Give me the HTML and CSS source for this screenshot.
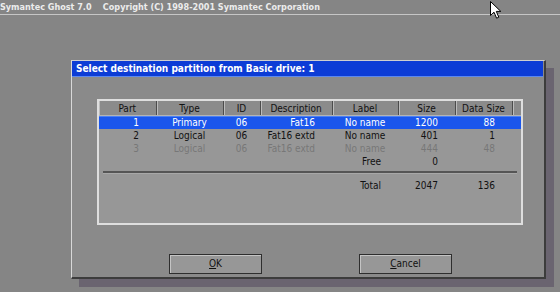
FILE: index.html
```html
<!DOCTYPE html>
<html lang="en">
  <head>
    <meta charset="UTF-8" />
    <title>Symantec Ghost 7.0</title>
    <link rel="stylesheet" href="styles.css">
  </head>
  <body>
    <div class="topbar">Symantec Ghost 7.0&nbsp;&nbsp;&nbsp; Copyright (C) 1998-2001 Symantec Corporation</div>

    <div class="dialog">
      <div class="titlebar">Select destination partition from Basic drive: 1</div>

      <div class="panel">
        <table class="parts">
          <colgroup>
            <col style="width: 57px" />
            <col style="width: 67px" />
            <col style="width: 37px" />
            <col style="width: 72px" />
            <col style="width: 66px" />
            <col style="width: 57px" />
            <col style="width: 57px" />
            <col style="width: 9px" />
          </colgroup>
          <thead>
            <tr>
              <th>Part</th>
              <th>Type</th>
              <th>ID</th>
              <th>Description</th>
              <th>Label</th>
              <th>Size</th>
              <th>Data Size</th>
              <th class="filler"></th>
            </tr>
          </thead>
          <tbody>
            <tr class="selected">
              <td class="num">1</td>
              <td class="mid">Primary</td>
              <td class="mid">06</td>
              <td class="num">Fat16</td>
              <td class="mid">No name</td>
              <td class="num">1200</td>
              <td class="num">88</td>
              <td></td>
            </tr>
            <tr>
              <td class="num">2</td>
              <td class="mid">Logical</td>
              <td class="mid">06</td>
              <td class="num">Fat16 extd</td>
              <td class="mid">No name</td>
              <td class="num">401</td>
              <td class="num">1</td>
              <td></td>
            </tr>
            <tr class="faded">
              <td class="num">3</td>
              <td class="mid">Logical</td>
              <td class="mid">06</td>
              <td class="num">Fat16 extd</td>
              <td class="mid">No name</td>
              <td class="num">444</td>
              <td class="num">48</td>
              <td></td>
            </tr>
            <tr>
              <td></td>
              <td></td>
              <td></td>
              <td></td>
              <td class="num">Free</td>
              <td class="num">0</td>
              <td></td>
              <td></td>
            </tr>
            <tr class="sep">
              <td colspan="8"><div class="rule"></div></td>
            </tr>
            <tr class="total">
              <td></td>
              <td></td>
              <td></td>
              <td></td>
              <td class="num">Total</td>
              <td class="num">2047</td>
              <td class="num">136</td>
              <td></td>
            </tr>
          </tbody>
        </table>
      </div>

      <div class="buttons">
        <div class="btn"><u>O</u>K</div>
        <div class="btn"><u>C</u>ancel</div>
      </div>
    </div>

    <svg class="cursor" width="13" height="20" viewBox="0 0 13 20">
      <path d="M1.5 1.5 L1.5 15.5 L5 12.2 L7.6 18.2 L9.8 17.2 L7.3 11.4 L11.8 11.4 Z"
            fill="#fff" stroke="#000" stroke-width="1" />
    </svg>
  </body>
</html>
```

FILE: styles.css
```css
body {
  margin: 0;
  width: 560px;
  height: 292px;
  overflow: hidden;
  position: relative;
  background: #858585;
  font-family: "Liberation Sans Narrow", "DejaVu Sans Condensed", "Liberation Sans", sans-serif;
  font-size: 10px;
  color: #111;
}

/* ========== Top Bar ========== */
.topbar {
  height: 14px;
  line-height: 14px;
  border-bottom: 1px solid #c6c6c6;
  color: #ececec;
  font-size: 9px;
  font-weight: bold;
  white-space: nowrap;
}

/* ========== Dialog ========== */
.dialog {
  box-sizing: border-box;
  width: 475px;
  height: 219px;
  margin: 45px 0 0 71px;
  background: #8a8a8a;
  border-top: 1px solid #cfcfcf;
  border-left: 1px solid #d8d8d8;
  border-right: 2px solid #3c3c3c;
  border-bottom: 2px solid #3c3c3c;
  box-shadow: 8px 8px 0 #6a6470;
}

.titlebar {
  height: 15px;
  line-height: 15px;
  margin-right: 1px;
  padding-left: 4px;
  background: #0c3cd6;
  border-bottom: 1px solid #5c88ee;
  color: #fff;
  font-size: 10px;
  font-weight: bold;
  white-space: nowrap;
}

/* ========== Partition table ========== */
.panel {
  width: 422px;
  height: 122px;
  margin: 22px 0 0 25px;
  background: #979797;
  border: 2px solid #dedede;
}

.parts {
  border-collapse: collapse;
  table-layout: fixed;
  width: 422px;
}

.parts th {
  height: 14px;
  padding: 0;
  font-weight: normal;
  text-align: center;
  background: #8b8b8b;
  border-right: 1px solid #4c4c4c;
  border-bottom: 1px solid #b4b4b4;
  box-shadow: inset 1px 0 0 #bcbcbc;
}

.parts th.filler {
  border-right: none;
}

.parts td {
  height: 13px;
  padding: 0;
  white-space: nowrap;
}

.parts td.num {
  text-align: right;
  padding-right: 17px;
}

.parts td.mid {
  text-align: center;
}

.parts tr.selected td {
  background: #1a56ec;
  color: #fff;
  box-shadow: inset 0 1px 0 #4a80f4;
}

.parts tr.faded td {
  color: #777;
}

.parts tr.sep td {
  height: 8px;
}

.rule {
  margin: 0 4px;
  border-top: 2px solid #555;
  border-bottom: 1px solid #a8a8a8;
}

.parts tr.total td {
  height: 18px;
}

/* ========== Buttons ========== */
.buttons {
  display: flex;
  gap: 97px;
  padding: 29px 0 0 97px;
}

.btn {
  box-sizing: border-box;
  width: 93px;
  height: 20px;
  line-height: 18px;
  text-align: center;
  background: #979797;
  border: 1px solid #2e2e2e;
  box-shadow: inset 1px 1px 0 #c4c4c4;
}

/* ========== Mouse pointer ========== */
.cursor {
  position: absolute;
  left: 489px;
  top: 0;
}
```
